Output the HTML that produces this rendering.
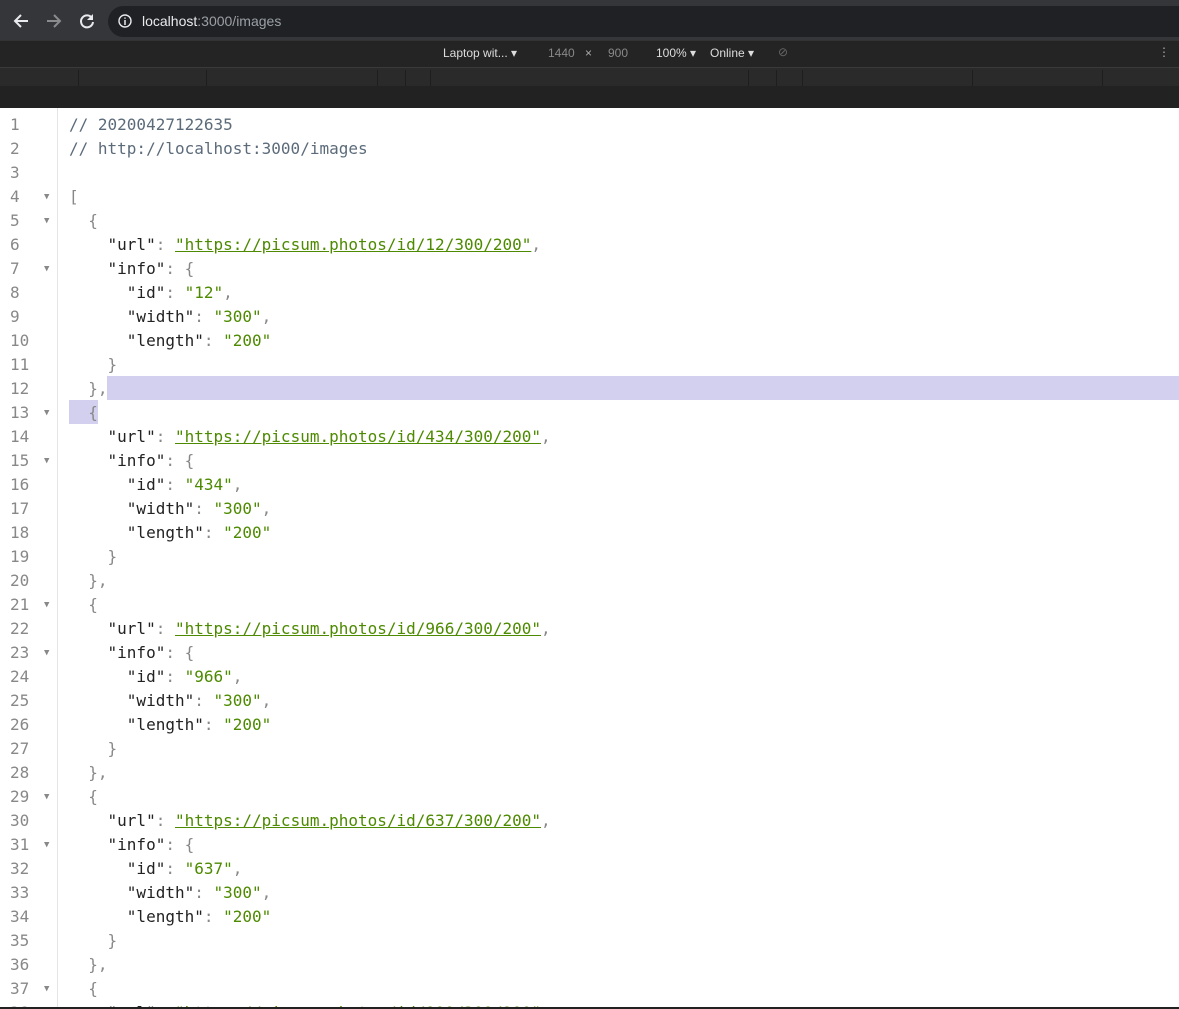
<!DOCTYPE html>
<html style="overflow:hidden;width:1179px;height:1009px"><head><meta charset="utf-8"><style>
*{margin:0;padding:0;box-sizing:border-box}
body{width:1179px;height:1009px;overflow:hidden;background:#fff;position:relative;font-family:"Liberation Sans",sans-serif}
.top{position:absolute;left:0;top:0;width:1179px;height:40px;background:#35363a}
.addr{position:absolute;left:108px;top:6px;width:1071px;height:31px;background:#202124;border-radius:16px 0 0 16px}
.dt{position:absolute;left:0;top:40px;width:1179px;height:27px;background:#242424;border-top:1px solid #333;color:#ddd;font-size:12px}
.rul{position:absolute;left:0;top:67px;width:1179px;height:19px;background:#2a2a2a;border-top:1px solid #3a3a3a}
.rul i{position:absolute;top:2px;width:1px;height:16px;background:#1e1e1e}
.sub{position:absolute;left:0;top:86px;width:1179px;height:22px;background:#222}
.gut{position:absolute;left:0;top:108px;width:58px;height:900px;border-right:1px solid #e5e5e5}
.ln{position:absolute;left:0;height:24px;line-height:24px;width:1179px;font-family:"DejaVu Sans Mono","Liberation Mono",monospace;font-size:16px;white-space:pre}
.n{position:absolute;left:10px;color:#888;font-size:16px}
.a{position:absolute;left:44px;color:#888;font-size:9px}
.c{position:absolute;left:69px;color:#222}
.p{color:#888}.s{color:#4d8a00}.u{color:#4d8a00;text-decoration:underline}.cm{color:#5c6b7a}
.sel{position:absolute;background:#d3cfee;height:24px}
</style></head><body>
<div class="top"><div class="addr"></div>
<svg style="position:absolute;left:12px;top:12px" width="18" height="18" viewBox="0 0 18 18"><path d="M16 9H3M9 3L3 9l6 6" stroke="#e8eaed" stroke-width="2" fill="none"/></svg>
<svg style="position:absolute;left:45px;top:12px" width="18" height="18" viewBox="0 0 18 18"><path d="M2 9h13M9 3l6 6-6 6" stroke="#8a8b8d" stroke-width="2" fill="none"/></svg>
<svg style="position:absolute;left:78px;top:12px" width="18" height="18" viewBox="0 0 18 18"><path d="M14 6A6 6 0 1 0 15 10" stroke="#e8eaed" stroke-width="2" fill="none"/><path d="M15 2v6h-6z" fill="#e8eaed"/></svg>
<svg style="position:absolute;left:118px;top:14px" width="14" height="14" viewBox="0 0 14 14"><circle cx="7" cy="7" r="6" stroke="#e8eaed" stroke-width="1.4" fill="none"/><path d="M7 6v5M7 3.5v1.2" stroke="#e8eaed" stroke-width="1.5"/></svg>
<div style="position:absolute;left:142px;top:13px;font-size:14px;color:#9aa0a6"><span style="color:#e8eaed">localhost</span>:3000/images</div>
</div>
<div class="dt">
<span style="position:absolute;left:443px;top:5px">Laptop wit... ▾</span>
<span style="position:absolute;left:548px;top:5px;color:#888">1440</span>
<span style="position:absolute;left:585px;top:5px;color:#aaa">×</span>
<span style="position:absolute;left:608px;top:5px;color:#888">900</span>
<span style="position:absolute;left:656px;top:5px">100% ▾</span>
<span style="position:absolute;left:710px;top:5px">Online ▾</span>
<span style="position:absolute;left:778px;top:4px;color:#666">⊘</span>
<span style="position:absolute;left:1158px;top:4px;color:#aaa">⋮</span>
</div>
<div class="rul"><i style="left:78px"></i><i style="left:206px"></i><i style="left:377px"></i><i style="left:405px"></i><i style="left:430px"></i><i style="left:748px"></i><i style="left:776px"></i><i style="left:802px"></i><i style="left:972px"></i><i style="left:1102px"></i></div>
<div class="sub"></div>
<div class="gut"></div>
<div class="sel" style="left:107px;top:376px;width:1072px"></div>
<div class="sel" style="left:69px;top:400px;width:29px"></div>
<div id="code"></div>
<div style="position:absolute;left:0;top:1007px;width:1179px;height:2px;background:#222"></div>
<script>
var L=[
['<span class="cm">// 20200427122635</span>',0],
['<span class="cm">// http://localhost:3000/images</span>',0],
['',0],['<span class="p">[</span>',1]];
function blk(id,last){
L.push(['  <span class="p">{</span>',1]);
L.push(['    "url"<span class="p">: </span><span class="u">"https://picsum.photos/id/'+id+'/300/200"</span><span class="p">,</span>',0]);
L.push(['    "info"<span class="p">: {</span>',1]);
L.push(['      "id"<span class="p">: </span><span class="s">"'+id+'"</span><span class="p">,</span>',0]);
L.push(['      "width"<span class="p">: </span><span class="s">"300"</span><span class="p">,</span>',0]);
L.push(['      "length"<span class="p">: </span><span class="s">"200"</span>',0]);
L.push(['    <span class="p">}</span>',0]);
L.push(['  <span class="p">},</span>',0]);
}
blk(12);blk(434);blk(966);blk(637);blk(100);
var h='';
for(var i=0;i<38;i++){var t=113+i*24;
h+='<div class="ln" style="top:'+t+'px"><span class="n">'+(i+1)+'</span>'+(L[i][1]?'<span class="a">▼</span>':'')+'<span class="c">'+L[i][0]+'</span></div>';}
document.getElementById('code').innerHTML=h;
</script>
</body></html>
